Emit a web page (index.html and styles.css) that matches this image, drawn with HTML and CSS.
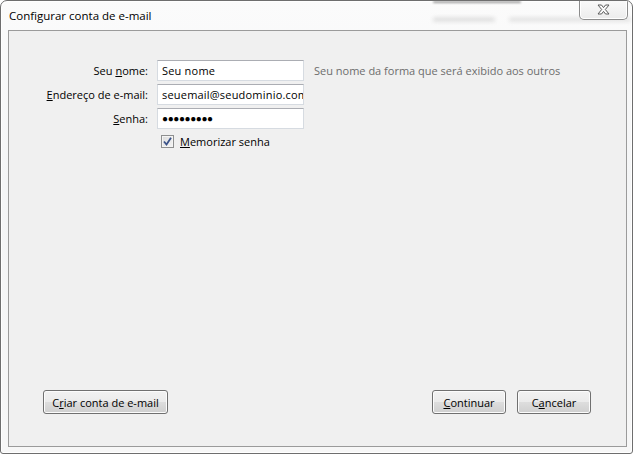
FILE: index.html
```html
<!DOCTYPE html>
<html lang="pt">
<head>
<meta charset="utf-8">
<title>Configurar conta de e-mail</title>
<link rel="stylesheet" href="styles.css">
</head>
<body>
<div class="window">
  <div class="titlebar">
    <span class="bg-blur bg-blur-1"></span>
    <span class="bg-blur bg-blur-2"></span>
    <span class="bg-blur bg-blur-3"></span>
    <span class="title">Configurar conta de e-mail</span>
    <button class="close" aria-label="Fechar">
      <svg width="13" height="11" viewBox="0 0 13 11"><polygon points="1,1 4.5,1 6.5,3.6 8.5,1 12,1 8.3,5.5 12,10 8.5,10 6.5,7.4 4.5,10 1,10 4.7,5.5" fill="#fdfdfd" stroke="#5b5b5b" stroke-width="1" stroke-linejoin="round"/></svg>
    </button>
  </div>
  <div class="panel">
    <div class="form">
      <label class="label">Seu <u>n</u>ome:</label>
      <div class="field">Seu nome</div>
      <span class="hint">Seu nome da forma que será exibido aos outros</span>

      <label class="label"><u>E</u>ndereço de e-mail:</label>
      <div class="field">seuemail@seudominio.com</div>
      <span></span>

      <label class="label"><u>S</u>enha:</label>
      <div class="field password">●●●●●●●●●</div>
      <span></span>

      <span></span>
      <div class="check-row">
        <span class="checkbox">
          <svg width="9" height="9" viewBox="0 0 9 9"><path d="M1 4.5 L3.5 7.5 L8 0.8" fill="none" stroke="#3b5389" stroke-width="1.8"/></svg>
        </span>
        <span class="check-label"><u>M</u>emorizar senha</span>
      </div>
      <span></span>
    </div>
    <div class="buttons">
      <button class="btn btn-wide">C<u>r</u>iar conta de e-mail</button>
      <div class="right-buttons">
        <button class="btn"><u>C</u>ontinuar</button>
        <button class="btn">C<u>a</u>ncelar</button>
      </div>
    </div>
  </div>
</div>
</body>
</html>
```
FILE: styles.css
```css
html, body {
  margin: 0;
  padding: 0;
  background: #ffffff;
}

body {
  width: 633px;
  height: 454px;
  overflow: hidden;
  font-family: "Open Sans", "Noto Sans", "Liberation Sans", sans-serif;
  font-size: 11px;
  color: #000;
}

.window {
  box-sizing: border-box;
  width: 633px;
  height: 454px;
  border: 1px solid #6e6e6e;
  border-radius: 7px 7px 3px 3px;
  background: linear-gradient(to bottom, #fbfbfb, #f4f5f6 40%, #f7f7f7);
  box-shadow: inset 1px 1px 0 #ffffff, inset -1px -1px 0 #ffffff;
  display: flex;
  flex-direction: column;
  overflow: hidden;
}

.titlebar {
  position: relative;
  height: 29px;
  display: flex;
  justify-content: space-between;
  align-items: flex-start;
  padding-left: 8px;
}

.title {
  position: relative;
  padding-top: 7px;
  font-size: 11.5px;
  color: #000;
}

.bg-blur {
  position: absolute;
  height: 3px;
  border-radius: 2px;
  background: #d2d2d2;
  filter: blur(2px);
  pointer-events: none;
}

.bg-blur-1 {
  left: 432px;
  top: 0;
  width: 88px;
  height: 2px;
  background: #9a9a9a;
  filter: blur(1px);
}

.bg-blur-2 {
  left: 432px;
  top: 17px;
  width: 62px;
}

.bg-blur-3 {
  left: 508px;
  top: 17px;
  width: 122px;
  background: #d8d8d8;
}

.close {
  position: relative;
  box-sizing: border-box;
  width: 49px;
  height: 20px;
  margin: -1px 4px 0 0;
  padding: 0;
  border: 1px solid #8c8c8c;
  border-top: none;
  border-radius: 0 0 5px 5px;
  background: linear-gradient(to bottom, #fafafa, #ececec);
  box-shadow: inset 0 0 0 1px #ffffff;
  display: flex;
  align-items: center;
  justify-content: center;
}

.panel {
  flex: 1;
  margin: 0 5px 6px 7px;
  border: 1px solid #9b9b9b;
  background: #f0f0f0;
  display: flex;
  flex-direction: column;
  justify-content: space-between;
}

.form {
  display: grid;
  grid-template-columns: 139px 147px auto;
  column-gap: 9px;
  row-gap: 3px;
  padding-top: 29px;
  align-items: center;
}

.label {
  text-align: right;
  white-space: nowrap;
}

.field {
  box-sizing: border-box;
  height: 21px;
  line-height: 19px;
  padding: 0 4px;
  border: 1px solid #d6dbe1;
  border-top-color: #abadb3;
  background: #ffffff;
  white-space: nowrap;
  overflow: hidden;
  letter-spacing: 0.2px;
}

.password {
  font-size: 10px;
  letter-spacing: -0.4px;
}

.hint {
  margin-left: 1px;
  color: #6d6d6d;
  white-space: nowrap;
}

.check-row {
  display: flex;
  align-items: center;
  gap: 6px;
  padding: 2px 0 0 4px;
  white-space: nowrap;
}

.checkbox {
  box-sizing: border-box;
  width: 13px;
  height: 13px;
  border: 1px solid #8e8f8f;
  background: linear-gradient(135deg, #dcdcdc, #f4f4f4);
  box-shadow: inset 0 0 0 1px #f4f4f4;
  display: flex;
  align-items: center;
  justify-content: center;
}

.buttons {
  display: flex;
  justify-content: space-between;
  align-items: center;
  padding: 0 35px 32px 34px;
}

.right-buttons {
  display: flex;
  gap: 11px;
}

.btn {
  box-sizing: border-box;
  width: 74px;
  height: 24px;
  padding: 0;
  border: 1px solid #707070;
  border-radius: 3px;
  background: linear-gradient(to bottom, #f2f2f2 0%, #ebebeb 48%, #dddddd 52%, #cfcfcf 100%);
  box-shadow: inset 0 0 0 1px #fcfcfc;
  font-family: inherit;
  font-size: 11px;
  color: #000;
}

.btn-wide {
  width: 125px;
}
```
